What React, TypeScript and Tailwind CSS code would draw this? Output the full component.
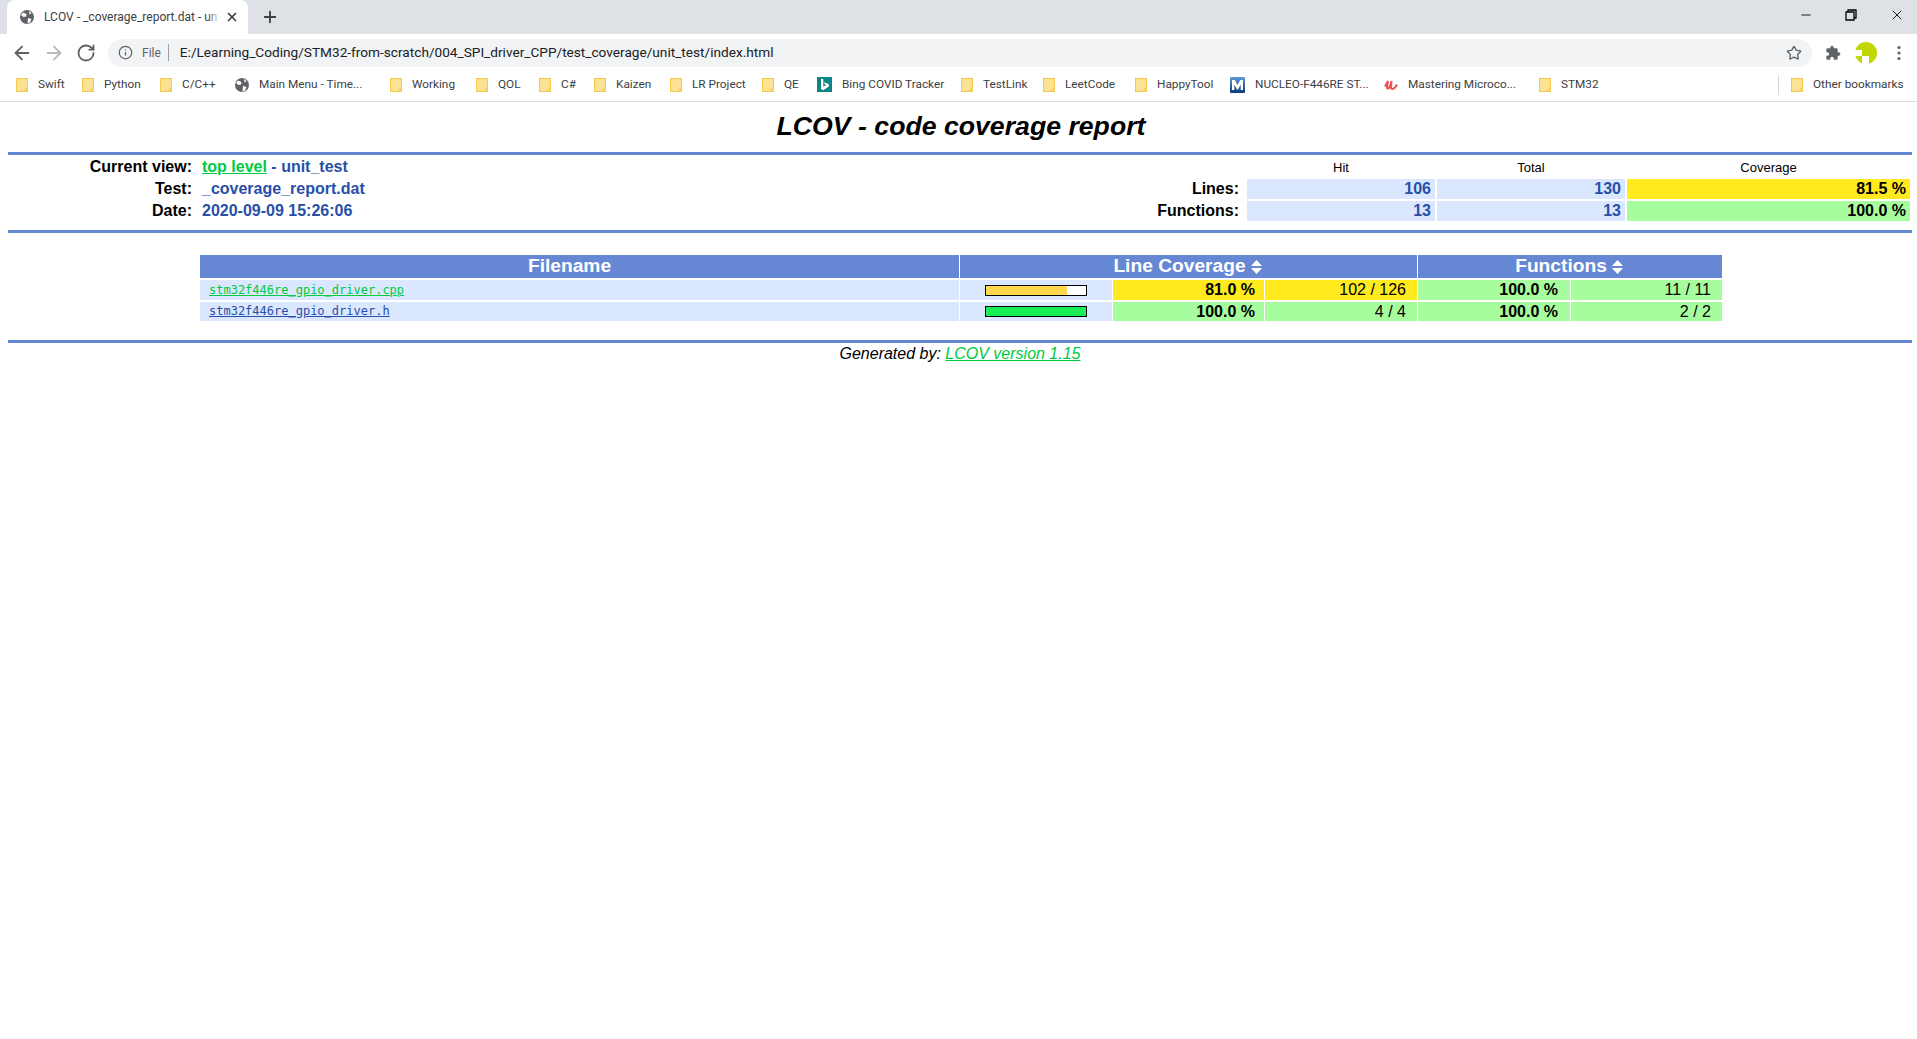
import { ArrowLeft, ArrowRight, RotateCw, Info, Star, Plus, X, Minus } from 'lucide-react';

const bookmarks = [
  { label: 'Swift', width: 'w-[66px]' },
  { label: 'Python', width: 'w-[78px]' },
  { label: 'C/C++', width: 'w-[75px]' },
  { label: 'Main Menu - Time...', width: 'w-[155px]', icon: 'globe' },
  { label: 'Working', width: 'w-[86px]' },
  { label: 'QOL', width: 'w-[63px]' },
  { label: 'C#', width: 'w-[55px]' },
  { label: 'Kaizen', width: 'w-[76px]' },
  { label: 'LR Project', width: 'w-[92px]' },
  { label: 'QE', width: 'w-[55px]' },
  { label: 'Bing COVID Tracker', width: 'w-[144px]', icon: 'bing' },
  { label: 'TestLink', width: 'w-[82px]' },
  { label: 'LeetCode', width: 'w-[92px]' },
  { label: 'HappyTool', width: 'w-[95px]' },
  { label: 'NUCLEO-F446RE ST...', width: 'w-[154px]', icon: 'mbed' },
  { label: 'Mastering Microco...', width: 'w-[155px]', icon: 'udemy' },
  { label: 'STM32', width: 'w-[80px]' },
];

function Folder() {
  return (
    <svg width="12" height="14" viewBox="0 0 12 14" className="shrink-0">
      <rect x=".5" y=".5" width="11" height="13" fill="#fde293" stroke="#f2c94c" />
      <path d="M9 13.500v-2.500h2.500" fill="none" stroke="#f2c94c" />
    </svg>
  );
}

function Globe() {
  return (
    <svg width="14" height="14" viewBox="0 0 14 14" className="shrink-0">
      <circle cx="7" cy="7" r="7" fill="#5f6368" />
      <path d="M3 2.500 6.500 4 6 6.500 3.500 7 1 5zM8 8l3.500 1-1.500 3.500-2.500 1zM9 1l2.500 2-2 1.500z" fill="#fff" />
    </svg>
  );
}

function BookmarkIcon({ icon }: { icon?: string }) {
  if (icon === 'globe') return <Globe />;
  if (icon === 'bing') {
    return (
      <svg width="15" height="15" viewBox="0 0 15 15" className="shrink-0">
        <rect width="15" height="15" fill="#0d8484" />
        <path d="M4 1.500 6.300 2.300v7.500l2.900-1.700-1.300-.6-.9-2.200 4.800 1.700v2.500L6.300 13.300 4 12z" fill="#fff" />
      </svg>
    );
  }
  if (icon === 'mbed') {
    return (
      <svg width="15" height="16" viewBox="0 0 15 16" className="shrink-0">
        <defs>
          <linearGradient id="mbedFill" x1="0" y1="0" x2="0" y2="1">
            <stop offset="0" stopColor="#5a9ad6" />
            <stop offset="1" stopColor="#0d3a78" />
          </linearGradient>
        </defs>
        <rect width="15" height="16" rx="1" fill="url(#mbedFill)" />
        <path d="M2 13V3h2.800l2.700 5 2.700-5H13v10h-2.300V7.500L8 12.500H7L4.300 7.500V13z" fill="#fff" />
      </svg>
    );
  }
  if (icon === 'udemy') {
    return (
      <svg width="14" height="14" viewBox="0 0 14 14" className="shrink-0">
        <path d="M1 8.500 4 3 3 9.500c0 2 2 1 3-1L7.500 3 7 9.500c0 2 2 2 4 0l2-3" fill="none" stroke="#ec5252" strokeWidth="2" />
      </svg>
    );
  }
  return <Folder />;
}

function SortIcon() {
  return (
    <svg width="11" height="14" viewBox="0 0 11 14" className="shrink-0">
      <path d="M5.500 0 11 6H0zM0 8h11l-5.500 6z" fill="#fff" />
    </svg>
  );
}

function BrowserChrome() {
  return (
    <div className="font-['Roboto',sans-serif] text-[#3c4043]">
      {/* Tab strip */}
      <div className="flex h-[34px] items-end bg-[#dee1e6] pl-[7px]">
        <div className="relative flex h-[34px] w-[241px] items-center rounded-t-lg bg-white pl-[13px] pr-[9px]">
          <Globe />
          <span className="ml-[10px] w-[176px] overflow-hidden whitespace-nowrap text-[12px]">
            LCOV - _coverage_report.dat - un
          </span>
          <div className="absolute left-[200px] top-0 h-full w-[14px] bg-gradient-to-r from-transparent to-white" />
          <X size={14} strokeWidth={3} className="ml-auto text-[#3c4043]" />
        </div>
        <div className="flex h-[34px] items-center pl-[13px]">
          <Plus size={18} strokeWidth={2.500} className="text-[#3c4043]" />
        </div>
        <div className="ml-auto flex h-[34px] items-center gap-[32px] pb-[4px] pr-[12px]">
          <Minus size={14} strokeWidth={1.500} className="text-black" />
          <svg width="12" height="12" viewBox="0 0 12 12">
            <path d="M3 3V1h8v8H9M1 3h8v8H1z" fill="none" stroke="#000" strokeWidth="1.300" />
          </svg>
          <X size={16} strokeWidth={1.300} className="text-black" />
        </div>
      </div>

      {/* Toolbar */}
      <div className="flex h-[34px] items-center bg-white pl-[11px] pr-[6px] pt-[3px]">
        <ArrowLeft size={22} strokeWidth={2} className="text-[#5f6368]" />
        <ArrowRight size={22} strokeWidth={2} className="ml-[10px] text-[#b8babd]" />
        <RotateCw size={20} strokeWidth={2.200} className="ml-[11px] text-[#5f6368]" />
        <div className="ml-[12px] flex h-[28px] w-[1704px] items-center rounded-full bg-[#f1f3f4] pl-[10px] pr-[10px]">
          <Info size={15} className="text-[#5f6368]" />
          <span className="ml-[9px] text-[12px] text-[#5f6368]">File</span>
          <span className="ml-[7px] h-[17px] w-px bg-[#9aa0a6]" />
          <span className="ml-[11px] text-[13.650px] text-[#202124]">
            E:/Learning_Coding/STM32-from-scratch/004_SPI_driver_CPP/test_coverage/unit_test/index.html
          </span>
          <Star size={16} strokeWidth={2} className="ml-auto text-[#5f6368]" />
        </div>
        <svg width="16" height="16" viewBox="0 0 24 24" className="ml-[13px]">
          <path
            d="M20.500 11H19V7c0-1.100-.9-2-2-2h-4V3.500C13 2.120 11.880 1 10.500 1S8 2.120 8 3.500V5H4c-1.100 0-1.990.9-1.990 2v3.800H3.500c1.490 0 2.700 1.210 2.700 2.700s-1.210 2.700-2.700 2.700H2V20c0 1.100.9 2 2 2h3.800v-1.500c0-1.490 1.210-2.700 2.700-2.700 1.490 0 2.700 1.210 2.700 2.700V22H17c1.100 0 2-.9 2-2v-4h1.500c1.380 0 2.500-1.120 2.500-2.500S21.880 11 20.500 11z"
            fill="#5f6368"
          />
        </svg>
        <svg width="22" height="22" viewBox="0 0 22 22" className="ml-[14px]">
          <circle cx="11" cy="11" r="11" fill="#c2d600" />
          <path d="M0 8h7v6H0zM7 14h7v8H7z" fill="#fff" />
        </svg>
        <svg width="4" height="16" viewBox="0 0 4 16" className="ml-[20px]">
          <circle cx="2" cy="2.500" r="1.600" fill="#5f6368" />
          <circle cx="2" cy="8" r="1.600" fill="#5f6368" />
          <circle cx="2" cy="13.500" r="1.600" fill="#5f6368" />
        </svg>
      </div>

      {/* Bookmarks bar */}
      <div className="flex h-[34px] items-center border-b border-[#d9dbde] bg-white pl-[16px] text-[11.800px] text-[#3c4043]">
        {bookmarks.map((b) => (
          <div key={b.label} className={`flex items-center gap-[10px] whitespace-nowrap ${b.width}`}>
            <BookmarkIcon icon={b.icon} />
            <span>{b.label}</span>
          </div>
        ))}
        <span className="ml-[159px] h-[20px] w-px bg-[#d3d5d8]" />
        <div className="ml-[12px] flex items-center gap-[10px] whitespace-nowrap">
          <Folder />
          <span>Other bookmarks</span>
        </div>
      </div>
    </div>
  );
}

function Rule() {
  return <div className="ml-[5px] h-[3px] bg-[#6688d4]" />;
}

const statCell = 'flex h-[20px] items-center justify-end pr-[4px] font-bold';
const dataCell = 'flex items-center justify-end';

export default function App() {
  return (
    <div className="min-h-[1039px] bg-white font-['Liberation_Sans',Arial,sans-serif] text-[16px] text-black">
      <BrowserChrome />

      <main className="pl-[3px] pr-[5px]">
        {/* Title */}
        <h1 className="mb-[2px] flex h-[48px] items-center justify-center pl-[7px] text-[26.670px] font-bold italic">
          LCOV - code coverage report
        </h1>
        <Rule />

        {/* Summary */}
        <div className="ml-[5px] flex justify-between pt-[2px]">
          <div className="grid grid-cols-[184px_auto] auto-rows-[20px] items-center gap-x-[10px] gap-y-[2px] font-bold">
            <span className="text-right">Current view:</span>
            <span className="text-[#284fa8]">
              <a className="text-[#00cb40] underline">top level</a> - unit_test
            </span>
            <span className="text-right">Test:</span>
            <span className="text-[#284fa8]">_coverage_report.dat</span>
            <span className="text-right">Date:</span>
            <span className="text-[#284fa8]">2020-09-09 15:26:06</span>
          </div>

          <div className="mr-[2px] grid grid-cols-[99px_188px_188px_283px] auto-rows-[20px] gap-x-[2px] gap-y-[2px]">
            <span />
            <span className="flex items-center justify-center pt-[1px] text-[13px]">Hit</span>
            <span className="flex items-center justify-center pt-[1px] text-[13px]">Total</span>
            <span className="flex items-center justify-center pt-[1px] text-[13px]">Coverage</span>

            <span className="flex items-center justify-end pr-[6px] font-bold">Lines:</span>
            <span className={`${statCell} bg-[#dae7fe] text-[#284fa8]`}>106</span>
            <span className={`${statCell} bg-[#dae7fe] text-[#284fa8]`}>130</span>
            <span className={`${statCell} bg-[#ffea20]`}>81.5 %</span>

            <span className="flex items-center justify-end pr-[6px] font-bold">Functions:</span>
            <span className={`${statCell} bg-[#dae7fe] text-[#284fa8]`}>13</span>
            <span className={`${statCell} bg-[#dae7fe] text-[#284fa8]`}>13</span>
            <span className={`${statCell} bg-[#a7fc9d]`}>100.0 %</span>
          </div>
        </div>
        <div className="mt-[9px]">
          <Rule />
        </div>

        {/* File table */}
        <div className="ml-[197px] mt-[22px] grid w-[1522px] grid-cols-[759px_152px_151px_152px_152px_151px] grid-rows-[23px_20px_19px] gap-x-px gap-y-[2px]">
          <div className="flex items-center justify-center bg-[#6688d4] pr-[20px] text-[19.200px] font-bold text-white">
            Filename
          </div>
          <div className="col-span-3 flex items-center justify-center gap-[5px] bg-[#6688d4] pr-[2px] text-[19.200px] font-bold text-white">
            Line Coverage <SortIcon />
          </div>
          <div className="col-span-2 flex items-center justify-center gap-[5px] bg-[#6688d4] pr-[2px] text-[19.200px] font-bold text-white">
            Functions <SortIcon />
          </div>

          <div className="flex items-center bg-[#dae7fe] pl-[9px] font-['DejaVu_Sans_Mono',monospace] text-[12px]">
            <a className="text-[#00cb40] underline">stm32f446re_gpio_driver.cpp</a>
          </div>
          <div className="flex items-center justify-center bg-[#dae7fe]">
            <div className="h-[11px] w-[102px] border border-black bg-white">
              <div className="h-full w-[81%] bg-[#ffd84d]" />
            </div>
          </div>
          <div className={`${dataCell} bg-[#ffea20] pr-[9px] font-bold`}>81.0 %</div>
          <div className={`${dataCell} bg-[#ffea20] pr-[11px]`}>102 / 126</div>
          <div className={`${dataCell} bg-[#a7fc9d] pr-[12px] font-bold`}>100.0 %</div>
          <div className={`${dataCell} bg-[#a7fc9d] pr-[11px]`}>11 / 11</div>

          <div className="flex items-center bg-[#dae7fe] pb-[2px] pl-[9px] font-['DejaVu_Sans_Mono',monospace] text-[12px]">
            <a className="text-[#284fa8] underline">stm32f446re_gpio_driver.h</a>
          </div>
          <div className="flex items-center justify-center bg-[#dae7fe]">
            <div className="h-[11px] w-[102px] border border-black bg-[#1aee55]" />
          </div>
          <div className={`${dataCell} bg-[#a7fc9d] pr-[9px] font-bold`}>100.0 %</div>
          <div className={`${dataCell} bg-[#a7fc9d] pr-[11px]`}>4 / 4</div>
          <div className={`${dataCell} bg-[#a7fc9d] pr-[12px] font-bold`}>100.0 %</div>
          <div className={`${dataCell} bg-[#a7fc9d] pr-[11px]`}>2 / 2</div>
        </div>

        <div className="mt-[19px]">
          <Rule />
        </div>
        <p className="pl-[5px] pt-[1px] text-center leading-[20px] italic">
          Generated by: <a className="text-[#00cb40] underline">LCOV version 1.15</a>
        </p>
      </main>
    </div>
  );
}
